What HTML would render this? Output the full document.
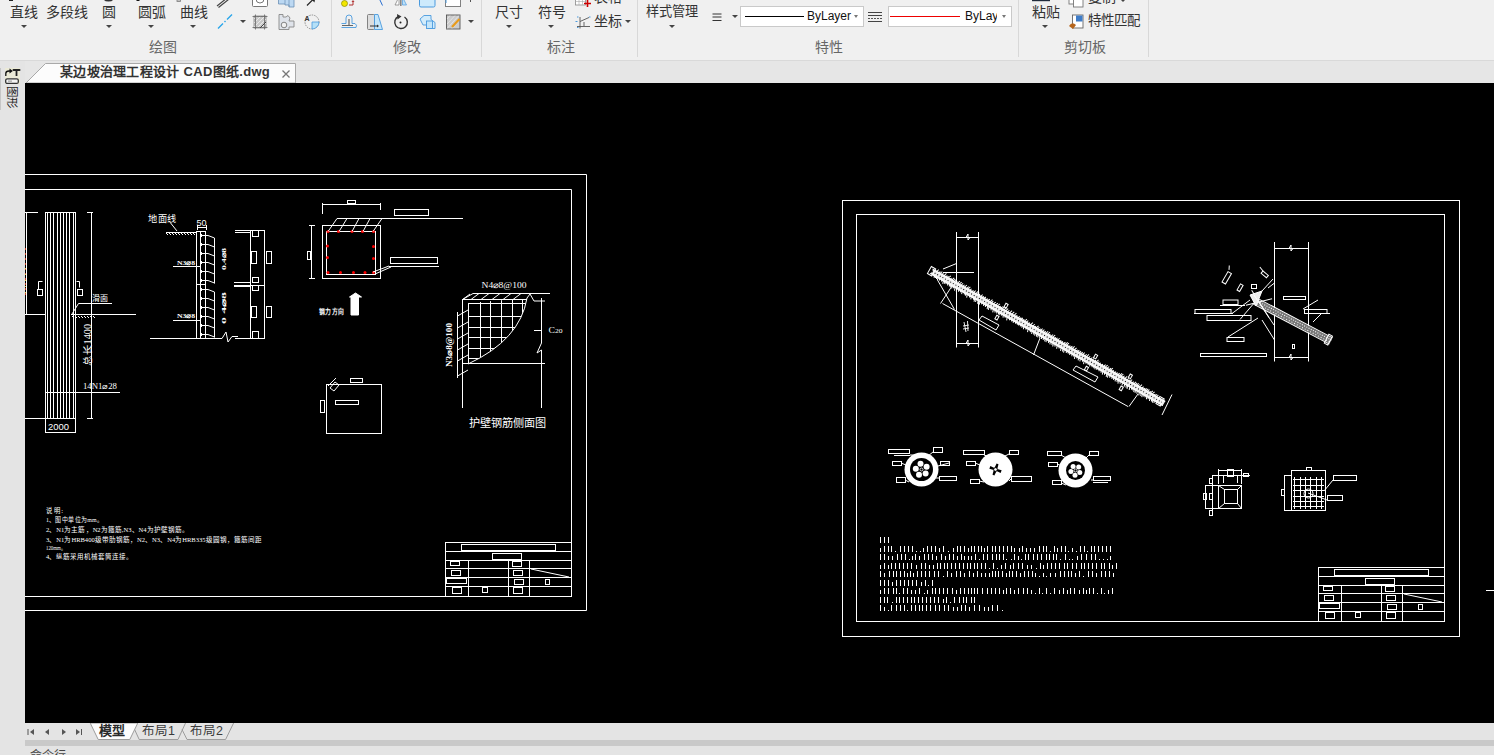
<!DOCTYPE html>
<html lang="zh-CN"><head><meta charset="utf-8">
<style>
*{box-sizing:border-box;margin:0;padding:0}
html,body{width:1494px;height:755px;overflow:hidden;background:#e4e4e4;font-family:"Liberation Sans",sans-serif;}
.abs{position:absolute}
#ribbon{position:absolute;left:0;top:0;width:1494px;height:61px;background:#f0f0f0;border-bottom:1px solid #d9d9d9}
.t{position:absolute;font-size:14px;line-height:14px;color:#333;white-space:nowrap}
.lbl{position:absolute;font-size:14px;line-height:14px;color:#666;white-space:nowrap}
.sep{position:absolute;top:0;width:1px;height:57px;background:#d8d8d8}
.arr{position:absolute;width:0;height:0;border-left:3px solid transparent;border-right:3px solid transparent;border-top:3px solid #444}
#tabrow{position:absolute;left:0;top:61px;width:1494px;height:22px;background:#e6e6e6}
#side{position:absolute;left:0;top:61px;width:25px;height:694px;background:#e4e4e4}
#canvas{position:absolute;left:25px;top:83px;width:1469px;height:640px;background:#000;overflow:hidden}
#btabs{position:absolute;left:25px;top:723px;width:1469px;height:17px;background:#e4e4e4}
#bbar{position:absolute;left:25px;top:740px;width:1469px;height:6px;background:#c9c9c9}
</style></head><body>
<div id="ribbon">
<svg width="1494" height="60" style="position:absolute;left:0;top:0">
<rect x="9" y="0" width="4" height="1" fill="#222"/>
<path d="M104,0 L113,0 Q112,1.5 108.5,1.5 Q105,1.5 104,0 Z" fill="#333"/>
<rect x="136.5" y="0" width="3" height="1" fill="#111"/>
<rect x="177" y="0" width="3.5" height="1.5" fill="none" stroke="#777" stroke-width="0.8"/>
<rect x="1032" y="0" width="18" height="1.2" fill="#1f2a3a"/>
<path d="M217,6 L227,-2 M218.5,7.5 L228.5,-0.5" stroke="#444" stroke-width="1.2"/>
<rect x="252.5" y="-6" width="15" height="12.5" rx="1" fill="#fff" stroke="#777" stroke-width="1"/><path d="M256,-1 A4,4 0 0 0 264,-1" fill="none" stroke="#777"/>
<path d="M278.5,-3 L294,-3 L294,7 L289,7 L289,5 L285,5 L285,4 L278.5,4 Z" fill="#bcd8f2" stroke="#6b8fb5" stroke-width="0.8"/><path d="M285,-3 L285,4 M289,-3 L289,7" stroke="#6b8fb5" stroke-width="0.7"/>
<path d="M307,5.5 L313,-0.5" stroke="#222" stroke-width="1.2"/><path d="M311,-1 L315,-1 L314.5,2.5 Z" fill="#222"/>
<circle cx="344.5" cy="3.5" r="3" fill="#f2e600" stroke="#8a8a00" stroke-width="0.7"/><path d="M349,5 L353,5 L353,2" fill="none" stroke="#b03030" stroke-width="1"/><path d="M351.5,2 L354.5,2 L353,0 Z" fill="#b03030"/>
<rect x="367" y="-3" width="4" height="3" fill="#555"/><path d="M371,-2 L376,-2 M379,-2 L382.5,5.5" stroke="#2a6fd0" stroke-width="1"/>
<path d="M395,5 L399,-3 L399,5 Z" fill="#fff" stroke="#777" stroke-width="0.7"/><rect x="400" y="-3" width="1.6" height="9" fill="#888"/><path d="M402.5,-3 L406.5,5 L402.5,5 Z" fill="#bde0f7" stroke="#4a9ade" stroke-width="0.7"/>
<rect x="419.5" y="-6" width="15.5" height="13" rx="1.5" fill="#cdeafc" stroke="#4a9ade" stroke-width="1"/><rect x="420" y="-2" width="9" height="2" fill="#777"/>
<rect x="445.5" y="-6" width="15" height="12.5" fill="#fff" stroke="#808080" stroke-width="1"/><rect x="445.5" y="0" width="1" height="3" fill="#4a9ade"/>
<path d="M470.5,0 L470.5,2" stroke="#555" stroke-width="1"/>
<rect x="575.5" y="-4" width="10" height="9" fill="#fff" stroke="#888" stroke-width="0.8"/><path d="M575.5,1.5 L585.5,1.5 M579,-4 L579,5 M582.5,-4 L582.5,5" stroke="#aaa" stroke-width="0.6"/><path d="M587.5,0 L587.5,7 M584,3.5 L591,3.5" stroke="#c00" stroke-width="1.6"/>
<rect x="1069" y="-5" width="9" height="9" fill="#fff" stroke="#777" stroke-width="0.9"/><rect x="1073.5" y="-2" width="9.5" height="9" fill="#fff" stroke="#777" stroke-width="0.9"/>
<path d="M218,28.5 L223,23.5 M224.5,22 L225.5,21 M227,19.5 L232,14.5" stroke="#2aa5ea" stroke-width="1.4"/>
<rect x="254" y="16" width="12" height="12" fill="#c8c8c8" stroke="#888" stroke-width="0.8"/><path d="M254,19 L257,16 M254,23 L261,16 M254,27 L265,16 M257,28 L266,19 M261,28 L266,23" stroke="#fff" stroke-width="0.6"/><path d="M252.5,16.5 L267.5,16.5 M252.5,27.5 L267.5,27.5 M255.5,14.5 L255.5,29.5 M264.5,14.5 L264.5,29.5" stroke="#666" stroke-width="0.8"/><path d="M260,28 L266,22" stroke="#444" stroke-width="1"/>
<path d="M279,14.5 L283,14.5 L283,17 L286,17 L288,15.5 L290,18 L289,21 L294,21 L294,27 L289,27 L289,29.5 L279,29.5 Z" fill="#dfe3ea" stroke="#888" stroke-width="0.9"/><circle cx="284" cy="25" r="2.8" fill="#f0f0f0" stroke="#777" stroke-width="0.9"/>
<circle cx="312" cy="22" r="7" fill="none" stroke="#777" stroke-width="0.8" stroke-dasharray="1.5 1"/><path d="M312,22 L319,22 A7,7 0 0 1 312,29 Z" fill="#b5e0f7" stroke="#4a9ade" stroke-width="0.8"/><text x="304.5" y="20.5" font-size="7" font-family="Liberation Sans" font-weight="bold" fill="#333">A</text>
<path d="M341.5,27.5 L356,27.5 Q357.5,25 355,23.5 L352,23.5 L352,18 Q352,15 349,15 Q346,15 346,18 L346,23.5 L341.5,23.5" fill="none" stroke="#4a9ade" stroke-width="0.9"/><path d="M342,25.5 L353,25.5 L349,25.5 L349,19" fill="none" stroke="#666" stroke-width="1.2"/>
<rect x="367.5" y="14.5" width="7" height="15" rx="1" fill="#ddd" stroke="#777" stroke-width="0.9"/><path d="M374.5,14.5 L378,14.5 L382.5,29.5 L374.5,29.5 Z" fill="#c5e6fa" stroke="#4a9ade" stroke-width="0.9"/><path d="M370,26 L378,26" stroke="#333" stroke-width="1"/><path d="M377,24.5 L379,26 L377,27.5 Z" fill="#333"/>
<path d="M398.5,16.5 A6.3,6.3 0 1 0 404.5,17" fill="none" stroke="#333" stroke-width="1.4"/><path d="M397,14 L401.5,16.5 L397.5,19.5 Z" fill="#333"/><circle cx="400.5" cy="22.5" r="1" fill="#222"/>
<path d="M420,19 L424,15.5 L431,15.5 L431,19.5 L435,22.5 L435,28.5 L428,28.5 L428,25 L423,25 Z" fill="#d3ecfb" stroke="#4a9ade" stroke-width="0.9"/><rect x="426.5" y="21" width="6" height="7.5" fill="#c5e6fa" stroke="#4a9ade" stroke-width="0.9"/>
<rect x="446.5" y="15" width="13.5" height="14" fill="#ccc" stroke="#555" stroke-width="0.9"/><path d="M447,19 L450,15.5 M447,24 L455,15.5 M447,28.5 L459,15.5 M452,28.5 L459,21" stroke="#eee" stroke-width="0.7"/><path d="M452,27 L459.5,19" stroke="#e89b1a" stroke-width="2.2"/>
<path d="M577,17 L578.5,17 M589,17 L590.5,17 M577,27.5 L578.5,27.5 M575.5,21.5 L577.5,21.5" stroke="#4a9ade" stroke-width="1.2"/><path d="M580,17 L580,28.5 M577,26.5 L590,26.5 M580,21.5 L589,17.5 M584,26 L584,22" stroke="#555" stroke-width="0.9"/>
<path d="M712.5,14 L721.5,14 M712.5,17 L721.5,17 M712.5,20.5 L721.5,20.5" stroke="#333" stroke-width="1.1"/>
<path d="M868,12.5 L882,12.5 M868,15.5 L882,15.5 M868,21.5 L882,21.5" stroke="#444" stroke-width="1"/><path d="M868,18.5 L882,18.5" stroke="#555" stroke-width="1" stroke-dasharray="2 1"/>
<rect x="1072.5" y="15" width="10.5" height="13" fill="#fff" stroke="#666" stroke-width="0.9"/><rect x="1076" y="15.5" width="6.5" height="6" fill="#3e7cc8"/><path d="M1069,26 Q1072,21 1076,25 L1073,29 Z" fill="#b5651d"/>
</svg>
  <div class="t" style="left:10px;top:5px">直线</div>
  <div class="t" style="left:46px;top:5px">多段线</div>
  <div class="t" style="left:102px;top:5px">圆</div>
  <div class="t" style="left:138px;top:5px">圆弧</div>
  <div class="t" style="left:180px;top:5px">曲线</div>
  <div class="arr" style="left:21px;top:25px"></div>
  <div class="arr" style="left:106px;top:25px"></div>
  <div class="arr" style="left:148px;top:25px"></div>
  <div class="arr" style="left:190px;top:25px"></div>
  <div class="arr" style="left:240px;top:20px"></div>
  <div class="lbl" style="left:149px;top:40px">绘图</div>
  <div class="sep" style="left:331px"></div>
  <div class="arr" style="left:468px;top:20px"></div>
  <div class="lbl" style="left:393px;top:40px">修改</div>
  <div class="sep" style="left:481px"></div>
  <div class="t" style="left:495px;top:5px">尺寸</div>
  <div class="t" style="left:538px;top:5px">符号</div>
  <div class="arr" style="left:506px;top:25px"></div>
  <div class="arr" style="left:548px;top:25px"></div>
  <div class="t" style="left:594px;top:-10px">表格</div>
  <div class="t" style="left:594px;top:14px">坐标</div>
  <div class="arr" style="left:625px;top:20px"></div>
  <div class="lbl" style="left:547px;top:40px">标注</div>
  <div class="sep" style="left:637px"></div>
  <div class="t" style="left:646px;top:5px;font-size:13.2px">样式管理</div>
  <div class="arr" style="left:669px;top:25px"></div>

  <div class="abs" style="left:740px;top:6px;width:124px;height:21px;background:#fff;border:1px solid #c9c9c9"></div>
  <div class="abs" style="left:745px;top:16px;width:59px;height:1px;background:#000"></div>
  <div class="abs" style="left:807px;top:9px;font-size:12px;line-height:14px;color:#111">ByLayer</div>
  <div class="arr" style="left:854px;top:15px;border-top-color:#777;border-left-width:2.5px;border-right-width:2.5px"></div>
  <div class="arr" style="left:732px;top:15px"></div>
  <div class="abs" style="left:888px;top:6px;width:124px;height:21px;background:#fff;border:1px solid #c9c9c9;overflow:hidden"><div class="abs" style="left:76px;top:2px;font-size:12px;line-height:14px;color:#111">ByLayer</div><div class="abs" style="left:108px;top:1px;width:16px;height:18px;background:#fff"></div></div>
  <div class="abs" style="left:890px;top:16px;width:70px;height:1px;background:#e00"></div>
  <div class="arr" style="left:1002px;top:15px;border-top-color:#777;border-left-width:2.5px;border-right-width:2.5px"></div>
  <div class="arr" style="left:1120px;top:-1px"></div>
  <div class="lbl" style="left:815px;top:40px">特性</div>
  <div class="sep" style="left:1018px"></div>
  <div class="t" style="left:1032px;top:5px">粘贴</div>
  <div class="arr" style="left:1042px;top:25px"></div>
  <div class="t" style="left:1088px;top:-10px">复制</div>
  <div class="t" style="left:1088px;top:14px;font-size:13.5px">特性匹配</div>
  <div class="lbl" style="left:1064px;top:40px">剪切板</div>
  <div class="sep" style="left:1148px"></div>
</div>
<div id="tabrow">
<svg width="320" height="22" style="position:absolute;left:0;top:0" shape-rendering="geometricPrecision">
<path d="M26,22 L45.5,2.5 L295.5,2.5 L295.5,22 Z" fill="#fcfcfc" stroke="#a9a9a9" stroke-width="1"/>
</svg>
<div class="abs" style="left:60px;top:4px;font-size:13px;line-height:14px;font-weight:bold;color:#333;white-space:nowrap;letter-spacing:0.3px">某边坡治理工程设计 CAD图纸.dwg</div>
<svg width="10" height="10" style="position:absolute;left:281px;top:8px"><path d="M1.5,1.5 L8.5,8.5 M8.5,1.5 L1.5,8.5" stroke="#777" stroke-width="1.3"/></svg>
</div>
<div id="side">
<div class="abs" style="left:0;top:7px;width:1px;height:42px;background:#c6c6c6"></div>
<svg width="25" height="60" style="position:absolute;left:0;top:0">
<rect x="5" y="7" width="15" height="16" fill="#ebead6"/>
<path d="M5.8,15 L5.8,12.5 Q5.8,10 9,10 L10,10" stroke="#111" stroke-width="1.3" fill="none"/><path d="M9.5,7.5 L12.8,10 L9.5,12.5 Z" fill="#111"/>
<path d="M13.5,9 L19.5,9" stroke="#222" stroke-width="2" stroke-linecap="round"/><path d="M16.5,9 L16.5,15" stroke="#222" stroke-width="1.8"/>
<rect x="5.7" y="17.8" width="12.6" height="4.6" rx="1.5" fill="#f4f4f4" stroke="#333" stroke-width="1.3"/>
<path d="M8,20.1 L12,20.1" stroke="#777" stroke-width="0.8"/>
</svg>
<div class="abs" style="left:5px;top:25px;width:14px;height:24px;overflow:visible">
<div style="position:absolute;left:-5px;top:5px;width:24px;height:14px;transform:rotate(90deg);font-size:11.5px;line-height:14px;color:#222;white-space:nowrap;letter-spacing:0px">图形</div>
</div>
</div>
<div id="canvas">
<svg width="1469" height="640" style="position:absolute;left:0;top:0">
<g transform="translate(-25,-83)">
<g stroke="#fff" fill="none" stroke-width="1">
<polyline points="0,174.5 586.5,174.5 586.5,610.5 0,610.5"/>
<polyline points="0,189.5 571.5,189.5 571.5,596.5 0,596.5"/>
<rect x="842.5" y="200.5" width="617.0" height="436.0"/>
<rect x="856.5" y="214.5" width="588.0" height="407.0"/>
<rect x="445.5" y="542.5" width="126.0" height="54.0"/>
<line x1="445.5" y1="551.5" x2="571.5" y2="551.5"/>
<line x1="445.5" y1="560.5" x2="571.5" y2="560.5"/>
<line x1="445.5" y1="568.5" x2="571.5" y2="568.5"/>
<line x1="445.5" y1="577.5" x2="571.5" y2="577.5"/>
<line x1="445.5" y1="586.5" x2="571.5" y2="586.5"/>
<line x1="468.5" y1="560.5" x2="468.5" y2="596.5"/>
<line x1="508.5" y1="560.5" x2="508.5" y2="596.5"/>
<line x1="529.5" y1="560.5" x2="529.5" y2="596.5"/>
<rect x="461.5" y="544.5" width="94.0" height="6.0"/>
<rect x="492.5" y="553.5" width="29.0" height="6.0"/>
<rect x="450.5" y="561.5" width="9.0" height="4.0"/>
<rect x="512.5" y="561.5" width="9.0" height="5.0"/>
<rect x="451.5" y="570.5" width="9.0" height="5.0"/>
<rect x="513.5" y="570.5" width="9.0" height="5.0"/>
<line x1="531" y1="569" x2="569" y2="577"/>
<rect x="446.5" y="578.5" width="20.0" height="5.0"/>
<rect x="514.5" y="579.5" width="9.0" height="5.0"/>
<rect x="545.5" y="579.5" width="4.0" height="5.0"/>
<rect x="452.5" y="587.5" width="9.0" height="6.0"/>
<rect x="482.5" y="587.5" width="5.0" height="5.0"/>
<rect x="513.5" y="587.5" width="9.0" height="6.0"/>
<rect x="1318.5" y="567.5" width="126.0" height="54.0"/>
<line x1="1318.5" y1="576.5" x2="1444.5" y2="576.5"/>
<line x1="1318.5" y1="585.5" x2="1444.5" y2="585.5"/>
<line x1="1318.5" y1="593.5" x2="1444.5" y2="593.5"/>
<line x1="1318.5" y1="602.5" x2="1444.5" y2="602.5"/>
<line x1="1318.5" y1="611.5" x2="1444.5" y2="611.5"/>
<line x1="1341.5" y1="585.5" x2="1341.5" y2="621.5"/>
<line x1="1381.5" y1="585.5" x2="1381.5" y2="621.5"/>
<line x1="1402.5" y1="585.5" x2="1402.5" y2="621.5"/>
<rect x="1334.5" y="569.5" width="94.0" height="6.0"/>
<rect x="1365.5" y="578.5" width="29.0" height="6.0"/>
<rect x="1323.5" y="586.5" width="9.0" height="4.0"/>
<rect x="1385.5" y="586.5" width="9.0" height="5.0"/>
<rect x="1324.5" y="595.5" width="9.0" height="5.0"/>
<rect x="1386.5" y="595.5" width="9.0" height="5.0"/>
<line x1="1404" y1="594" x2="1442" y2="602"/>
<rect x="1319.5" y="603.5" width="20.0" height="5.0"/>
<rect x="1387.5" y="604.5" width="9.0" height="5.0"/>
<rect x="1418.5" y="604.5" width="4.0" height="5.0"/>
<rect x="1325.5" y="612.5" width="9.0" height="6.0"/>
<rect x="1355.5" y="612.5" width="5.0" height="5.0"/>
<rect x="1386.5" y="612.5" width="9.0" height="6.0"/>
<line x1="26.5" y1="212" x2="26.5" y2="314.5"/>
<line x1="25" y1="212.5" x2="38" y2="212.5"/>
<line x1="25" y1="314.5" x2="45" y2="314.5"/>
<line x1="45.5" y1="212" x2="45.5" y2="418.5"/>
<line x1="47.5" y1="212" x2="47.5" y2="418.5"/>
<line x1="50.5" y1="212" x2="50.5" y2="418.5"/>
<line x1="53.5" y1="212" x2="53.5" y2="418.5"/>
<line x1="57.5" y1="212" x2="57.5" y2="418.5"/>
<line x1="60.5" y1="212" x2="60.5" y2="418.5"/>
<line x1="63.5" y1="212" x2="63.5" y2="418.5"/>
<line x1="66.5" y1="212" x2="66.5" y2="418.5"/>
<line x1="69.5" y1="212" x2="69.5" y2="418.5"/>
<line x1="73.5" y1="212" x2="73.5" y2="418.5"/>
<line x1="75.5" y1="212" x2="75.5" y2="418.5"/>
<line x1="45" y1="212.5" x2="76" y2="212.5"/>
<line x1="25" y1="418.5" x2="76" y2="418.5"/>
<line x1="45" y1="392.5" x2="120" y2="392.5"/>
<rect x="45.5" y="418.5" width="30.0" height="14.0"/>
<line x1="91.5" y1="212" x2="91.5" y2="418.5"/>
<line x1="87" y1="212.5" x2="93" y2="212.5"/>
<line x1="87" y1="418.5" x2="93" y2="418.5"/>
<polyline points="42.5,281.5 38.5,281.5 38.5,289.5"/>
<rect x="37.5" y="289.5" width="5.0" height="6.0"/>
<polyline points="76.5,281.5 79.5,281.5 79.5,287.5"/>
<rect x="77.5" y="289.5" width="5.0" height="6.0"/>
<line x1="71" y1="314.5" x2="136" y2="314.5"/>
<polyline points="72,314 78.5,303.5 112,303.5"/>
<line x1="72" y1="316" x2="74" y2="318"/>
<line x1="75" y1="316" x2="77" y2="318"/>
<line x1="78" y1="316" x2="80" y2="318"/>
<line x1="81" y1="316" x2="83" y2="318"/>
<line x1="84" y1="316" x2="86" y2="318"/>
<line x1="87" y1="316" x2="89" y2="318"/>
<line x1="90" y1="316" x2="92" y2="318"/>
<line x1="93" y1="316" x2="95" y2="318"/>
<line x1="166" y1="232.5" x2="196" y2="232.5"/>
<line x1="166" y1="233" x2="168" y2="235"/>
<line x1="169" y1="233" x2="171" y2="235"/>
<line x1="172" y1="233" x2="174" y2="235"/>
<line x1="175" y1="233" x2="177" y2="235"/>
<line x1="178" y1="233" x2="180" y2="235"/>
<line x1="181" y1="233" x2="183" y2="235"/>
<line x1="184" y1="233" x2="186" y2="235"/>
<line x1="187" y1="233" x2="189" y2="235"/>
<line x1="190" y1="233" x2="192" y2="235"/>
<line x1="193" y1="233" x2="195" y2="235"/>
<line x1="169" y1="221" x2="177" y2="231"/>
<rect x="196.5" y="231.5" width="9.0" height="107.0"/>
<line x1="200.5" y1="231.5" x2="200.5" y2="338.5"/>
<line x1="196" y1="284.5" x2="206" y2="284.5"/>
<line x1="197" y1="227.5" x2="206" y2="227.5"/>
<line x1="197.5" y1="225" x2="197.5" y2="230"/>
<line x1="206.5" y1="225" x2="206.5" y2="230"/>
<polyline points="201,235.5 208,235.5 214.5,238.0"/>
<polyline points="201,244.5 208,244.5 214.5,247.0"/>
<polyline points="201,253.5 208,253.5 214.5,256.0"/>
<polyline points="201,262.5 208,262.5 214.5,265.0"/>
<polyline points="201,271.5 208,271.5 214.5,274.0"/>
<polyline points="201,280.5 208,280.5 214.5,283.0"/>
<polyline points="201,289.5 208,289.5 214.5,292.0"/>
<polyline points="201,298.5 208,298.5 214.5,301.0"/>
<polyline points="201,307.5 208,307.5 214.5,310.0"/>
<polyline points="201,316.5 208,316.5 214.5,319.0"/>
<polyline points="201,325.5 208,325.5 214.5,328.0"/>
<polyline points="201,334.5 208,334.5 214.5,337.0"/>
<line x1="214.5" y1="238" x2="214.5" y2="283.5"/>
<line x1="214.5" y1="292" x2="214.5" y2="337.5"/>
<rect x="200" y="234" width="2" height="3" fill="#fff" stroke="none"/>
<rect x="200" y="243" width="2" height="3" fill="#fff" stroke="none"/>
<rect x="200" y="252" width="2" height="3" fill="#fff" stroke="none"/>
<rect x="200" y="261" width="2" height="3" fill="#fff" stroke="none"/>
<rect x="200" y="270" width="2" height="3" fill="#fff" stroke="none"/>
<rect x="200" y="279" width="2" height="3" fill="#fff" stroke="none"/>
<rect x="200" y="288" width="2" height="3" fill="#fff" stroke="none"/>
<rect x="200" y="297" width="2" height="3" fill="#fff" stroke="none"/>
<rect x="200" y="306" width="2" height="3" fill="#fff" stroke="none"/>
<rect x="200" y="315" width="2" height="3" fill="#fff" stroke="none"/>
<rect x="200" y="324" width="2" height="3" fill="#fff" stroke="none"/>
<rect x="200" y="333" width="2" height="3" fill="#fff" stroke="none"/>
<line x1="173" y1="266.5" x2="201" y2="266.5"/>
<line x1="173" y1="320.5" x2="201" y2="320.5"/>
<line x1="150" y1="338.5" x2="222" y2="338.5"/>
<polyline points="222,338.5 226,332 228,342 232,336.5 238,336.5"/>
<line x1="235" y1="230.5" x2="265" y2="230.5"/>
<line x1="235" y1="232.5" x2="250" y2="232.5"/>
<line x1="250.5" y1="230" x2="250.5" y2="338.5"/>
<line x1="264.5" y1="230" x2="264.5" y2="338.5"/>
<line x1="234" y1="282.5" x2="250" y2="282.5"/>
<line x1="234" y1="285.5" x2="265" y2="285.5"/>
<line x1="234" y1="286.5" x2="250" y2="286.5"/>
<line x1="235" y1="338.5" x2="265" y2="338.5"/>
<rect x="252.5" y="230.5" width="6.0" height="6.0"/>
<rect x="251.5" y="251.5" width="5.0" height="12.0"/>
<rect x="252.5" y="277.5" width="6.0" height="5.0"/>
<rect x="252.5" y="285.5" width="6.0" height="5.0"/>
<rect x="251.5" y="306.5" width="5.0" height="11.0"/>
<rect x="252.5" y="331.5" width="6.0" height="7.0"/>
<rect x="266.5" y="251.5" width="5.0" height="12.0"/>
<rect x="266.5" y="306.5" width="5.0" height="11.0"/>
<line x1="322" y1="204.5" x2="381" y2="204.5"/>
<line x1="322.5" y1="203" x2="322.5" y2="214"/>
<line x1="380.5" y1="203" x2="380.5" y2="210"/>
<rect x="347.5" y="200.5" width="8.0" height="3.0"/>
<rect x="394.5" y="209.5" width="34.0" height="6.0"/>
<line x1="337" y1="218.5" x2="463" y2="218.5"/>
<rect x="322.5" y="225.5" width="58.0" height="53.0"/>
<rect x="326.5" y="231.5" width="49.0" height="43.0"/>
<circle cx="328" cy="231.5" r="1.5" fill="#f00" stroke="none"/>
<circle cx="338.5" cy="231.5" r="1.5" fill="#f00" stroke="none"/>
<circle cx="352" cy="231.5" r="1.5" fill="#f00" stroke="none"/>
<circle cx="362.5" cy="231.5" r="1.5" fill="#f00" stroke="none"/>
<circle cx="373.5" cy="231.5" r="1.5" fill="#f00" stroke="none"/>
<circle cx="327.5" cy="246" r="1.5" fill="#f00" stroke="none"/>
<circle cx="327.5" cy="257.5" r="1.5" fill="#f00" stroke="none"/>
<circle cx="373.5" cy="246.5" r="1.5" fill="#f00" stroke="none"/>
<circle cx="373.5" cy="258.5" r="1.5" fill="#f00" stroke="none"/>
<circle cx="328" cy="272.5" r="1.5" fill="#f00" stroke="none"/>
<circle cx="340.5" cy="272.5" r="1.5" fill="#f00" stroke="none"/>
<circle cx="353.5" cy="272.5" r="1.5" fill="#f00" stroke="none"/>
<circle cx="365" cy="272.5" r="1.5" fill="#f00" stroke="none"/>
<circle cx="373.5" cy="272.5" r="1.5" fill="#f00" stroke="none"/>
<line x1="337" y1="218.5" x2="328" y2="231.5"/>
<line x1="347" y1="218.5" x2="339" y2="231.5"/>
<line x1="359" y1="218.5" x2="352" y2="231.5"/>
<line x1="370" y1="218.5" x2="363" y2="231.5"/>
<line x1="382" y1="218.5" x2="373" y2="231.5"/>
<line x1="311.5" y1="225.5" x2="311.5" y2="278.5"/>
<line x1="309" y1="225.5" x2="315" y2="225.5"/>
<line x1="309" y1="278.5" x2="315" y2="278.5"/>
<rect x="307.5" y="251.5" width="3.0" height="8.0"/>
<rect x="390.5" y="257.5" width="47.0" height="6.0"/>
<line x1="389" y1="266.5" x2="439" y2="266.5"/>
<line x1="373" y1="272" x2="389" y2="266"/>
<line x1="375" y1="274" x2="391" y2="267"/>
<polygon points="351,315 351,297 349.5,297 355.5,293 361.5,297 358.5,297 358.5,315" fill="#fff"/>
<rect x="326.5" y="384.5" width="55.0" height="49.0"/>
<rect x="350.5" y="378.5" width="12.0" height="4.0"/>
<rect x="335.5" y="400.5" width="23.0" height="4.0"/>
<rect x="320.5" y="400.5" width="4.0" height="12.0"/>
<polygon points="330,388 335,382 339,385 334,391"/>
<line x1="328" y1="386" x2="336" y2="378"/>
<line x1="473" y1="293.5" x2="550" y2="293.5"/>
<polyline points="473,293.5 462.5,299.5 527,299.5"/>
<line x1="462.5" y1="299" x2="462.5" y2="408"/>
<line x1="541.5" y1="298" x2="541.5" y2="343"/>
<polyline points="541.5,343 537,353 541.5,350 541.5,408"/>
<line x1="462" y1="363.5" x2="545" y2="363.5"/>
<polyline points="527,298 530,294 534,301 545,301"/>
<clipPath id="mc"><path d="M468,303 L527,298 Q520,340 468,364 Z"/></clipPath>
<g clip-path="url(#mc)">
<line x1="468.5" y1="299" x2="468.5" y2="366"/>
<line x1="480.5" y1="299" x2="480.5" y2="366"/>
<line x1="490.5" y1="299" x2="490.5" y2="366"/>
<line x1="501.5" y1="299" x2="501.5" y2="366"/>
<line x1="512.5" y1="299" x2="512.5" y2="366"/>
<line x1="522.5" y1="299" x2="522.5" y2="366"/>
<line x1="466" y1="303.5" x2="530" y2="303.5"/>
<line x1="466" y1="316.5" x2="530" y2="316.5"/>
<line x1="466" y1="327.5" x2="530" y2="327.5"/>
<line x1="466" y1="337.5" x2="530" y2="337.5"/>
<line x1="466" y1="348.5" x2="530" y2="348.5"/>
<line x1="466" y1="358.5" x2="530" y2="358.5"/>
</g>
<path d="M527,298 Q520,340 468,364" />
<line x1="471" y1="299.5" x2="479" y2="293.5"/>
<line x1="481" y1="299.5" x2="489" y2="293.5"/>
<line x1="492" y1="299.5" x2="500" y2="293.5"/>
<line x1="503" y1="299.5" x2="511" y2="293.5"/>
<line x1="513" y1="299.5" x2="521" y2="293.5"/>
<line x1="462" y1="300" x2="470" y2="294"/>
<line x1="457.5" y1="316" x2="468" y2="310"/>
<line x1="457.5" y1="328" x2="468" y2="322"/>
<line x1="457.5" y1="339" x2="468" y2="333"/>
<line x1="457.5" y1="350" x2="468" y2="344"/>
<line x1="457.5" y1="361" x2="468" y2="355"/>
<line x1="457.5" y1="376" x2="468" y2="370"/>
<line x1="457.5" y1="312" x2="457.5" y2="378"/>
<line x1="534" y1="330.5" x2="541" y2="330.5"/>
<line x1="956.5" y1="232" x2="956.5" y2="347.5"/>
<line x1="978.5" y1="232" x2="978.5" y2="347.5"/>
<line x1="956" y1="237.5" x2="978" y2="237.5"/>
<line x1="956" y1="343.5" x2="978" y2="343.5"/>
<polyline points="966,237.5 968,234 968,240 970,237.5"/>
<polyline points="966,343.5 968,340 968,346 970,343.5"/>
<line x1="943" y1="272.5" x2="974" y2="272.5"/>
<line x1="943" y1="269" x2="956.5" y2="263.5"/>
<line x1="942.5" y1="303.5" x2="1128" y2="406.5"/>
<line x1="1129" y1="406.5" x2="1138" y2="394"/>
<line x1="1033.5" y1="355" x2="1040" y2="338"/>
<line x1="1172" y1="394.5" x2="1162" y2="415"/>
<line x1="937.5" y1="280" x2="954.5" y2="309.5"/>
<line x1="940.5" y1="303.5" x2="952" y2="286"/>
<line x1="931" y1="273" x2="938" y2="280"/>
<path d="M964,322 L966,332 M967.5,321 L968,331 M963,326 L969,325 M963,329 L969,328" stroke-width="0.9"/>
<polygon points="979,320 982,316 999,325 996,330" />
<polygon points="1073,370 1076,366 1098,377 1095,382" />
<g transform="translate(932,271.5) rotate(29.638)"><rect x="0" y="-3" width="266.9" height="6" fill="#f0f0f0" stroke="none"/><line x1="-1" y1="-2.5" x2="266.9" y2="-2.5"/><line x1="-1" y1="2.5" x2="266.9" y2="2.5"/><line x1="0" y1="0" x2="266.9" y2="0" stroke="#000" stroke-dasharray="1 2"/><rect x="-3" y="-4" width="5" height="8"/><rect x="259.9" y="-4" width="5" height="8"/><line x1="4.0" y1="-2.5" x2="5.0" y2="-5.0" stroke-width="1"/><line x1="4.0" y1="2.5" x2="5.0" y2="4.5" stroke-width="1"/><line x1="6.5" y1="-2.5" x2="7.5" y2="-4.0" stroke-width="1"/><line x1="6.5" y1="2.5" x2="7.5" y2="4.0" stroke-width="1"/><line x1="8.0" y1="-2.5" x2="9.0" y2="-5.0" stroke-width="1"/><line x1="8.0" y1="2.5" x2="9.0" y2="4.0" stroke-width="1"/><line x1="10.0" y1="-2.5" x2="11.0" y2="-4.0" stroke-width="1"/><line x1="10.0" y1="2.5" x2="11.0" y2="4.0" stroke-width="1"/><line x1="12.5" y1="-2.5" x2="13.5" y2="-5.5" stroke-width="1"/><line x1="12.5" y1="2.5" x2="13.5" y2="4.0" stroke-width="1"/><line x1="14.5" y1="-2.5" x2="15.5" y2="-4.0" stroke-width="1"/><line x1="14.5" y1="2.5" x2="15.5" y2="5.5" stroke-width="1"/><line x1="16.0" y1="-2.5" x2="17.0" y2="-4.0" stroke-width="1"/><line x1="16.0" y1="2.5" x2="17.0" y2="4.5" stroke-width="1"/><line x1="17.5" y1="-2.5" x2="18.5" y2="-5.5" stroke-width="1"/><line x1="17.5" y1="2.5" x2="18.5" y2="4.0" stroke-width="1"/><line x1="19.5" y1="-2.5" x2="20.5" y2="-4.0" stroke-width="1"/><line x1="19.5" y1="2.5" x2="20.5" y2="4.5" stroke-width="1"/><line x1="21.5" y1="-2.5" x2="22.5" y2="-5.5" stroke-width="1"/><line x1="21.5" y1="2.5" x2="22.5" y2="4.5" stroke-width="1"/><line x1="23.0" y1="-2.5" x2="24.0" y2="-5.0" stroke-width="1"/><line x1="23.0" y1="2.5" x2="24.0" y2="4.5" stroke-width="1"/><line x1="24.5" y1="-2.5" x2="25.5" y2="-4.5" stroke-width="1"/><line x1="24.5" y1="2.5" x2="25.5" y2="5.0" stroke-width="1"/><line x1="26.0" y1="-2.5" x2="27.0" y2="-4.0" stroke-width="1"/><line x1="26.0" y1="2.5" x2="27.0" y2="4.0" stroke-width="1"/><line x1="28.0" y1="-2.5" x2="29.0" y2="-5.5" stroke-width="1"/><line x1="28.0" y1="2.5" x2="29.0" y2="5.5" stroke-width="1"/><line x1="30.0" y1="-2.5" x2="31.0" y2="-5.5" stroke-width="1"/><line x1="30.0" y1="2.5" x2="31.0" y2="5.5" stroke-width="1"/><line x1="32.0" y1="-2.5" x2="33.0" y2="-5.0" stroke-width="1"/><line x1="32.0" y1="2.5" x2="33.0" y2="4.5" stroke-width="1"/><line x1="34.0" y1="-2.5" x2="35.0" y2="-4.5" stroke-width="1"/><line x1="34.0" y1="2.5" x2="35.0" y2="4.0" stroke-width="1"/><line x1="36.0" y1="-2.5" x2="37.0" y2="-5.5" stroke-width="1"/><line x1="36.0" y1="2.5" x2="37.0" y2="5.0" stroke-width="1"/><line x1="38.5" y1="-2.5" x2="39.5" y2="-5.0" stroke-width="1"/><line x1="38.5" y1="2.5" x2="39.5" y2="4.0" stroke-width="1"/><line x1="40.0" y1="-2.5" x2="41.0" y2="-5.5" stroke-width="1"/><line x1="40.0" y1="2.5" x2="41.0" y2="4.5" stroke-width="1"/><line x1="42.0" y1="-2.5" x2="43.0" y2="-4.5" stroke-width="1"/><line x1="42.0" y1="2.5" x2="43.0" y2="5.5" stroke-width="1"/><line x1="44.5" y1="-2.5" x2="45.5" y2="-4.0" stroke-width="1"/><line x1="44.5" y1="2.5" x2="45.5" y2="4.0" stroke-width="1"/><line x1="46.5" y1="-2.5" x2="47.5" y2="-5.0" stroke-width="1"/><line x1="46.5" y1="2.5" x2="47.5" y2="5.0" stroke-width="1"/><line x1="49.0" y1="-2.5" x2="50.0" y2="-5.5" stroke-width="1"/><line x1="49.0" y1="2.5" x2="50.0" y2="4.0" stroke-width="1"/><line x1="50.5" y1="-2.5" x2="51.5" y2="-5.0" stroke-width="1"/><line x1="50.5" y1="2.5" x2="51.5" y2="5.5" stroke-width="1"/><line x1="52.0" y1="-2.5" x2="53.0" y2="-4.0" stroke-width="1"/><line x1="52.0" y1="2.5" x2="53.0" y2="5.0" stroke-width="1"/><line x1="54.5" y1="-2.5" x2="55.5" y2="-5.0" stroke-width="1"/><line x1="54.5" y1="2.5" x2="55.5" y2="5.5" stroke-width="1"/><line x1="56.5" y1="-2.5" x2="57.5" y2="-4.0" stroke-width="1"/><line x1="56.5" y1="2.5" x2="57.5" y2="5.5" stroke-width="1"/><line x1="58.5" y1="-2.5" x2="59.5" y2="-4.5" stroke-width="1"/><line x1="58.5" y1="2.5" x2="59.5" y2="4.0" stroke-width="1"/><line x1="61.0" y1="-2.5" x2="62.0" y2="-4.0" stroke-width="1"/><line x1="61.0" y1="2.5" x2="62.0" y2="4.5" stroke-width="1"/><line x1="63.0" y1="-2.5" x2="64.0" y2="-4.5" stroke-width="1"/><line x1="63.0" y1="2.5" x2="64.0" y2="4.5" stroke-width="1"/><line x1="65.5" y1="-2.5" x2="66.5" y2="-5.5" stroke-width="1"/><line x1="65.5" y1="2.5" x2="66.5" y2="5.5" stroke-width="1"/><line x1="67.0" y1="-2.5" x2="68.0" y2="-4.5" stroke-width="1"/><line x1="67.0" y1="2.5" x2="68.0" y2="5.5" stroke-width="1"/><line x1="69.5" y1="-2.5" x2="70.5" y2="-5.0" stroke-width="1"/><line x1="69.5" y1="2.5" x2="70.5" y2="4.5" stroke-width="1"/><line x1="72.0" y1="-2.5" x2="73.0" y2="-5.0" stroke-width="1"/><line x1="72.0" y1="2.5" x2="73.0" y2="5.5" stroke-width="1"/><line x1="74.0" y1="-2.5" x2="75.0" y2="-5.5" stroke-width="1"/><line x1="74.0" y1="2.5" x2="75.0" y2="4.5" stroke-width="1"/><line x1="76.0" y1="-2.5" x2="77.0" y2="-4.0" stroke-width="1"/><line x1="76.0" y1="2.5" x2="77.0" y2="4.5" stroke-width="1"/><line x1="78.0" y1="-2.5" x2="79.0" y2="-4.5" stroke-width="1"/><line x1="78.0" y1="2.5" x2="79.0" y2="4.5" stroke-width="1"/><line x1="79.5" y1="-2.5" x2="80.5" y2="-5.5" stroke-width="1"/><line x1="79.5" y1="2.5" x2="80.5" y2="4.5" stroke-width="1"/><line x1="81.5" y1="-2.5" x2="82.5" y2="-5.0" stroke-width="1"/><line x1="81.5" y1="2.5" x2="82.5" y2="4.0" stroke-width="1"/><line x1="83.5" y1="-2.5" x2="84.5" y2="-5.5" stroke-width="1"/><line x1="83.5" y1="2.5" x2="84.5" y2="5.0" stroke-width="1"/><line x1="85.5" y1="-2.5" x2="86.5" y2="-4.5" stroke-width="1"/><line x1="85.5" y1="2.5" x2="86.5" y2="4.0" stroke-width="1"/><line x1="88.0" y1="-2.5" x2="89.0" y2="-5.5" stroke-width="1"/><line x1="88.0" y1="2.5" x2="89.0" y2="5.5" stroke-width="1"/><line x1="90.5" y1="-2.5" x2="91.5" y2="-5.5" stroke-width="1"/><line x1="90.5" y1="2.5" x2="91.5" y2="4.0" stroke-width="1"/><line x1="93.0" y1="-2.5" x2="94.0" y2="-5.5" stroke-width="1"/><line x1="93.0" y1="2.5" x2="94.0" y2="4.0" stroke-width="1"/><line x1="95.0" y1="-2.5" x2="96.0" y2="-4.0" stroke-width="1"/><line x1="95.0" y1="2.5" x2="96.0" y2="4.5" stroke-width="1"/><line x1="97.5" y1="-2.5" x2="98.5" y2="-4.5" stroke-width="1"/><line x1="97.5" y1="2.5" x2="98.5" y2="4.0" stroke-width="1"/><line x1="99.5" y1="-2.5" x2="100.5" y2="-4.0" stroke-width="1"/><line x1="99.5" y1="2.5" x2="100.5" y2="4.0" stroke-width="1"/><line x1="101.0" y1="-2.5" x2="102.0" y2="-4.5" stroke-width="1"/><line x1="101.0" y1="2.5" x2="102.0" y2="4.0" stroke-width="1"/><line x1="103.0" y1="-2.5" x2="104.0" y2="-4.0" stroke-width="1"/><line x1="103.0" y1="2.5" x2="104.0" y2="4.0" stroke-width="1"/><line x1="105.0" y1="-2.5" x2="106.0" y2="-5.5" stroke-width="1"/><line x1="105.0" y1="2.5" x2="106.0" y2="4.5" stroke-width="1"/><line x1="107.0" y1="-2.5" x2="108.0" y2="-5.0" stroke-width="1"/><line x1="107.0" y1="2.5" x2="108.0" y2="5.0" stroke-width="1"/><line x1="109.5" y1="-2.5" x2="110.5" y2="-4.0" stroke-width="1"/><line x1="109.5" y1="2.5" x2="110.5" y2="4.0" stroke-width="1"/><line x1="112.0" y1="-2.5" x2="113.0" y2="-5.5" stroke-width="1"/><line x1="112.0" y1="2.5" x2="113.0" y2="5.5" stroke-width="1"/><line x1="114.5" y1="-2.5" x2="115.5" y2="-5.0" stroke-width="1"/><line x1="114.5" y1="2.5" x2="115.5" y2="4.0" stroke-width="1"/><line x1="116.5" y1="-2.5" x2="117.5" y2="-4.0" stroke-width="1"/><line x1="116.5" y1="2.5" x2="117.5" y2="5.0" stroke-width="1"/><line x1="118.5" y1="-2.5" x2="119.5" y2="-5.5" stroke-width="1"/><line x1="118.5" y1="2.5" x2="119.5" y2="4.5" stroke-width="1"/><line x1="120.0" y1="-2.5" x2="121.0" y2="-4.5" stroke-width="1"/><line x1="120.0" y1="2.5" x2="121.0" y2="5.0" stroke-width="1"/><line x1="122.0" y1="-2.5" x2="123.0" y2="-4.0" stroke-width="1"/><line x1="122.0" y1="2.5" x2="123.0" y2="5.0" stroke-width="1"/><line x1="123.5" y1="-2.5" x2="124.5" y2="-5.0" stroke-width="1"/><line x1="123.5" y1="2.5" x2="124.5" y2="5.0" stroke-width="1"/><line x1="125.5" y1="-2.5" x2="126.5" y2="-5.0" stroke-width="1"/><line x1="125.5" y1="2.5" x2="126.5" y2="4.5" stroke-width="1"/><line x1="127.5" y1="-2.5" x2="128.5" y2="-4.5" stroke-width="1"/><line x1="127.5" y1="2.5" x2="128.5" y2="4.5" stroke-width="1"/><line x1="129.5" y1="-2.5" x2="130.5" y2="-5.5" stroke-width="1"/><line x1="129.5" y1="2.5" x2="130.5" y2="4.5" stroke-width="1"/><line x1="131.5" y1="-2.5" x2="132.5" y2="-5.5" stroke-width="1"/><line x1="131.5" y1="2.5" x2="132.5" y2="5.0" stroke-width="1"/><line x1="133.0" y1="-2.5" x2="134.0" y2="-4.0" stroke-width="1"/><line x1="133.0" y1="2.5" x2="134.0" y2="5.0" stroke-width="1"/><line x1="135.5" y1="-2.5" x2="136.5" y2="-5.0" stroke-width="1"/><line x1="135.5" y1="2.5" x2="136.5" y2="4.5" stroke-width="1"/><line x1="137.5" y1="-2.5" x2="138.5" y2="-5.5" stroke-width="1"/><line x1="137.5" y1="2.5" x2="138.5" y2="5.0" stroke-width="1"/><line x1="139.5" y1="-2.5" x2="140.5" y2="-4.0" stroke-width="1"/><line x1="139.5" y1="2.5" x2="140.5" y2="4.5" stroke-width="1"/><line x1="141.0" y1="-2.5" x2="142.0" y2="-4.5" stroke-width="1"/><line x1="141.0" y1="2.5" x2="142.0" y2="5.5" stroke-width="1"/><line x1="143.0" y1="-2.5" x2="144.0" y2="-5.0" stroke-width="1"/><line x1="143.0" y1="2.5" x2="144.0" y2="4.5" stroke-width="1"/><line x1="145.5" y1="-2.5" x2="146.5" y2="-4.0" stroke-width="1"/><line x1="145.5" y1="2.5" x2="146.5" y2="5.5" stroke-width="1"/><line x1="147.5" y1="-2.5" x2="148.5" y2="-4.0" stroke-width="1"/><line x1="147.5" y1="2.5" x2="148.5" y2="4.0" stroke-width="1"/><line x1="150.0" y1="-2.5" x2="151.0" y2="-4.5" stroke-width="1"/><line x1="150.0" y1="2.5" x2="151.0" y2="5.5" stroke-width="1"/><line x1="152.0" y1="-2.5" x2="153.0" y2="-5.5" stroke-width="1"/><line x1="152.0" y1="2.5" x2="153.0" y2="5.0" stroke-width="1"/><line x1="153.5" y1="-2.5" x2="154.5" y2="-5.5" stroke-width="1"/><line x1="153.5" y1="2.5" x2="154.5" y2="5.5" stroke-width="1"/><line x1="156.0" y1="-2.5" x2="157.0" y2="-4.0" stroke-width="1"/><line x1="156.0" y1="2.5" x2="157.0" y2="4.5" stroke-width="1"/><line x1="158.0" y1="-2.5" x2="159.0" y2="-4.5" stroke-width="1"/><line x1="158.0" y1="2.5" x2="159.0" y2="4.0" stroke-width="1"/><line x1="160.0" y1="-2.5" x2="161.0" y2="-5.5" stroke-width="1"/><line x1="160.0" y1="2.5" x2="161.0" y2="4.5" stroke-width="1"/><line x1="162.5" y1="-2.5" x2="163.5" y2="-5.0" stroke-width="1"/><line x1="162.5" y1="2.5" x2="163.5" y2="4.5" stroke-width="1"/><line x1="164.5" y1="-2.5" x2="165.5" y2="-4.0" stroke-width="1"/><line x1="164.5" y1="2.5" x2="165.5" y2="4.0" stroke-width="1"/><line x1="166.0" y1="-2.5" x2="167.0" y2="-4.5" stroke-width="1"/><line x1="166.0" y1="2.5" x2="167.0" y2="5.5" stroke-width="1"/><line x1="168.0" y1="-2.5" x2="169.0" y2="-4.5" stroke-width="1"/><line x1="168.0" y1="2.5" x2="169.0" y2="4.0" stroke-width="1"/><line x1="170.0" y1="-2.5" x2="171.0" y2="-4.5" stroke-width="1"/><line x1="170.0" y1="2.5" x2="171.0" y2="5.0" stroke-width="1"/><line x1="172.0" y1="-2.5" x2="173.0" y2="-5.0" stroke-width="1"/><line x1="172.0" y1="2.5" x2="173.0" y2="5.0" stroke-width="1"/><line x1="174.5" y1="-2.5" x2="175.5" y2="-4.5" stroke-width="1"/><line x1="174.5" y1="2.5" x2="175.5" y2="4.0" stroke-width="1"/><line x1="176.5" y1="-2.5" x2="177.5" y2="-5.5" stroke-width="1"/><line x1="176.5" y1="2.5" x2="177.5" y2="5.5" stroke-width="1"/><line x1="178.5" y1="-2.5" x2="179.5" y2="-4.5" stroke-width="1"/><line x1="178.5" y1="2.5" x2="179.5" y2="4.0" stroke-width="1"/><line x1="181.0" y1="-2.5" x2="182.0" y2="-4.5" stroke-width="1"/><line x1="181.0" y1="2.5" x2="182.0" y2="4.0" stroke-width="1"/><line x1="183.0" y1="-2.5" x2="184.0" y2="-4.5" stroke-width="1"/><line x1="183.0" y1="2.5" x2="184.0" y2="4.5" stroke-width="1"/><line x1="185.5" y1="-2.5" x2="186.5" y2="-4.0" stroke-width="1"/><line x1="185.5" y1="2.5" x2="186.5" y2="4.0" stroke-width="1"/><line x1="187.5" y1="-2.5" x2="188.5" y2="-5.5" stroke-width="1"/><line x1="187.5" y1="2.5" x2="188.5" y2="4.0" stroke-width="1"/><line x1="189.0" y1="-2.5" x2="190.0" y2="-4.5" stroke-width="1"/><line x1="189.0" y1="2.5" x2="190.0" y2="4.5" stroke-width="1"/><line x1="191.0" y1="-2.5" x2="192.0" y2="-4.0" stroke-width="1"/><line x1="191.0" y1="2.5" x2="192.0" y2="4.0" stroke-width="1"/><line x1="193.5" y1="-2.5" x2="194.5" y2="-4.0" stroke-width="1"/><line x1="193.5" y1="2.5" x2="194.5" y2="4.0" stroke-width="1"/><line x1="196.0" y1="-2.5" x2="197.0" y2="-5.0" stroke-width="1"/><line x1="196.0" y1="2.5" x2="197.0" y2="4.5" stroke-width="1"/><line x1="198.0" y1="-2.5" x2="199.0" y2="-5.5" stroke-width="1"/><line x1="198.0" y1="2.5" x2="199.0" y2="5.5" stroke-width="1"/><line x1="200.0" y1="-2.5" x2="201.0" y2="-5.0" stroke-width="1"/><line x1="200.0" y1="2.5" x2="201.0" y2="4.5" stroke-width="1"/><line x1="202.5" y1="-2.5" x2="203.5" y2="-4.5" stroke-width="1"/><line x1="202.5" y1="2.5" x2="203.5" y2="5.5" stroke-width="1"/><line x1="204.0" y1="-2.5" x2="205.0" y2="-5.5" stroke-width="1"/><line x1="204.0" y1="2.5" x2="205.0" y2="5.5" stroke-width="1"/><line x1="206.0" y1="-2.5" x2="207.0" y2="-4.0" stroke-width="1"/><line x1="206.0" y1="2.5" x2="207.0" y2="4.5" stroke-width="1"/><line x1="208.5" y1="-2.5" x2="209.5" y2="-4.0" stroke-width="1"/><line x1="208.5" y1="2.5" x2="209.5" y2="4.5" stroke-width="1"/><line x1="210.5" y1="-2.5" x2="211.5" y2="-4.0" stroke-width="1"/><line x1="210.5" y1="2.5" x2="211.5" y2="4.5" stroke-width="1"/><line x1="212.5" y1="-2.5" x2="213.5" y2="-4.5" stroke-width="1"/><line x1="212.5" y1="2.5" x2="213.5" y2="5.0" stroke-width="1"/><line x1="214.5" y1="-2.5" x2="215.5" y2="-5.5" stroke-width="1"/><line x1="214.5" y1="2.5" x2="215.5" y2="4.5" stroke-width="1"/><line x1="216.0" y1="-2.5" x2="217.0" y2="-5.5" stroke-width="1"/><line x1="216.0" y1="2.5" x2="217.0" y2="5.5" stroke-width="1"/><line x1="218.0" y1="-2.5" x2="219.0" y2="-4.5" stroke-width="1"/><line x1="218.0" y1="2.5" x2="219.0" y2="4.5" stroke-width="1"/><line x1="220.5" y1="-2.5" x2="221.5" y2="-5.5" stroke-width="1"/><line x1="220.5" y1="2.5" x2="221.5" y2="5.0" stroke-width="1"/><line x1="223.0" y1="-2.5" x2="224.0" y2="-4.5" stroke-width="1"/><line x1="223.0" y1="2.5" x2="224.0" y2="5.0" stroke-width="1"/><line x1="225.0" y1="-2.5" x2="226.0" y2="-4.0" stroke-width="1"/><line x1="225.0" y1="2.5" x2="226.0" y2="5.0" stroke-width="1"/><line x1="226.5" y1="-2.5" x2="227.5" y2="-5.0" stroke-width="1"/><line x1="226.5" y1="2.5" x2="227.5" y2="5.5" stroke-width="1"/><line x1="229.0" y1="-2.5" x2="230.0" y2="-4.0" stroke-width="1"/><line x1="229.0" y1="2.5" x2="230.0" y2="5.5" stroke-width="1"/><line x1="231.0" y1="-2.5" x2="232.0" y2="-5.0" stroke-width="1"/><line x1="231.0" y1="2.5" x2="232.0" y2="4.0" stroke-width="1"/><line x1="232.5" y1="-2.5" x2="233.5" y2="-4.5" stroke-width="1"/><line x1="232.5" y1="2.5" x2="233.5" y2="4.0" stroke-width="1"/><line x1="234.0" y1="-2.5" x2="235.0" y2="-5.0" stroke-width="1"/><line x1="234.0" y1="2.5" x2="235.0" y2="5.0" stroke-width="1"/><line x1="235.5" y1="-2.5" x2="236.5" y2="-4.5" stroke-width="1"/><line x1="235.5" y1="2.5" x2="236.5" y2="5.0" stroke-width="1"/><line x1="237.5" y1="-2.5" x2="238.5" y2="-5.5" stroke-width="1"/><line x1="237.5" y1="2.5" x2="238.5" y2="5.0" stroke-width="1"/><line x1="240.0" y1="-2.5" x2="241.0" y2="-4.5" stroke-width="1"/><line x1="240.0" y1="2.5" x2="241.0" y2="5.5" stroke-width="1"/><line x1="242.0" y1="-2.5" x2="243.0" y2="-4.0" stroke-width="1"/><line x1="242.0" y1="2.5" x2="243.0" y2="5.0" stroke-width="1"/><line x1="243.5" y1="-2.5" x2="244.5" y2="-4.5" stroke-width="1"/><line x1="243.5" y1="2.5" x2="244.5" y2="5.5" stroke-width="1"/><line x1="245.0" y1="-2.5" x2="246.0" y2="-5.0" stroke-width="1"/><line x1="245.0" y1="2.5" x2="246.0" y2="4.0" stroke-width="1"/><line x1="246.5" y1="-2.5" x2="247.5" y2="-5.0" stroke-width="1"/><line x1="246.5" y1="2.5" x2="247.5" y2="4.0" stroke-width="1"/><line x1="248.5" y1="-2.5" x2="249.5" y2="-4.0" stroke-width="1"/><line x1="248.5" y1="2.5" x2="249.5" y2="5.0" stroke-width="1"/><line x1="250.0" y1="-2.5" x2="251.0" y2="-5.5" stroke-width="1"/><line x1="250.0" y1="2.5" x2="251.0" y2="4.0" stroke-width="1"/><line x1="252.0" y1="-2.5" x2="253.0" y2="-5.5" stroke-width="1"/><line x1="252.0" y1="2.5" x2="253.0" y2="5.0" stroke-width="1"/><line x1="254.0" y1="-2.5" x2="255.0" y2="-4.0" stroke-width="1"/><line x1="254.0" y1="2.5" x2="255.0" y2="4.5" stroke-width="1"/><line x1="255.5" y1="-2.5" x2="256.5" y2="-4.5" stroke-width="1"/><line x1="255.5" y1="2.5" x2="256.5" y2="5.0" stroke-width="1"/><line x1="257.0" y1="-2.5" x2="258.0" y2="-4.5" stroke-width="1"/><line x1="257.0" y1="2.5" x2="258.0" y2="4.5" stroke-width="1"/><rect x="80" y="-9" width="2.5" height="4"/><rect x="78" y="6" width="2.5" height="4"/><rect x="183" y="-9" width="2.5" height="4"/><rect x="181" y="6" width="2.5" height="4"/><rect x="223" y="-9" width="2.5" height="4"/><rect x="221" y="6" width="2.5" height="4"/></g>
<line x1="1274.5" y1="242" x2="1274.5" y2="361.5"/>
<line x1="1308.5" y1="242" x2="1308.5" y2="361.5"/>
<line x1="1274" y1="248.5" x2="1308" y2="248.5"/>
<line x1="1274" y1="357.5" x2="1308" y2="357.5"/>
<polyline points="1289,248.5 1291,245 1291,251 1293,248.5"/>
<polyline points="1289,357.5 1291,354 1291,360 1293,357.5"/>
<g transform="translate(1255,301) rotate(27.759)"><rect x="0" y="-3" width="85.9" height="6" fill="#777" stroke="none"/><line x1="0" y1="-3.5" x2="85.9" y2="-3.5"/><line x1="0" y1="3.5" x2="85.9" y2="3.5"/><line x1="0" y1="-1" x2="85.9" y2="-1" stroke-dasharray="1 1.5"/><line x1="0" y1="1.5" x2="85.9" y2="1.5" stroke-dasharray="1 2"/><rect x="80.9" y="-5" width="4" height="10"/><line x1="-8" y1="-8" x2="20" y2="8"/><line x1="-6" y1="8" x2="14" y2="-10"/></g>
<polygon points="1250,295 1262,291 1256,306" fill="#eee"/>
<line x1="1254" y1="295" x2="1274" y2="325"/>
<line x1="1262" y1="320" x2="1274.5" y2="340"/>
<line x1="1262" y1="291" x2="1273" y2="279"/>
<line x1="1268" y1="288" x2="1274.5" y2="283"/>
<line x1="1258" y1="318" x2="1228" y2="337"/>
<line x1="1250" y1="300" x2="1232" y2="313.5"/>
<line x1="1240" y1="319.5" x2="1255" y2="302"/>
<line x1="1318" y1="300" x2="1303" y2="309"/>
<line x1="1322" y1="313" x2="1313" y2="322"/>
<rect x="1223" y="300" width="15" height="4.5"/>
<rect x="1195" y="309.5" width="36" height="4.0"/>
<rect x="1207" y="315.5" width="44" height="5.0"/>
<rect x="1227" y="337.5" width="17" height="4.0"/>
<rect x="1200.5" y="353.5" width="66.0" height="3.0"/>
<rect x="1283.5" y="296.5" width="22.0" height="3.0"/>
<rect x="1304.5" y="309.5" width="22.5" height="4.0"/>
<rect x="1251.5" y="284.5" width="5.0" height="4.0"/>
<rect x="1292.5" y="344.5" width="2.0" height="4.0"/>
<line x1="1220" y1="305.5" x2="1245" y2="305.5"/>
<line x1="1194" y1="313.5" x2="1233" y2="313.5"/>
<line x1="1304" y1="313.5" x2="1330" y2="313.5"/>
<line x1="1283" y1="299.5" x2="1306" y2="299.5"/>
<g transform="translate(1222,282) rotate(-60)"><rect x="0" y="0" width="12" height="4"/><line x1="14" y1="0" x2="18" y2="-2"/></g>
<g transform="translate(1237,290) rotate(-60)"><rect x="0" y="0" width="7" height="3"/></g>
<g transform="translate(1263,271) rotate(40)"><rect x="0" y="0" width="7" height="3"/><line x1="-5" y1="-1" x2="0" y2="0"/></g>
<circle cx="921.5" cy="469.5" r="17" fill="#fff" stroke="none"/>
<circle cx="921.5" cy="469.5" r="11.5" fill="#000" stroke="none"/>
<circle cx="920.5" cy="463.8" r="3.0" fill="#fff" stroke="none"/>
<circle cx="915.8" cy="468.7" r="3.0" fill="#fff" stroke="none"/>
<circle cx="919.0" cy="474.7" r="3.0" fill="#fff" stroke="none"/>
<circle cx="925.6" cy="473.5" r="3.0" fill="#fff" stroke="none"/>
<circle cx="926.6" cy="466.8" r="3.0" fill="#fff" stroke="none"/>
<circle cx="921.5" cy="469.5" r="1.5" fill="#000" stroke="#fff" stroke-width="0.8"/>
<circle cx="995.5" cy="469.5" r="17" fill="#fff" stroke="none"/>
<g transform="translate(995.5,469.5)" fill="#000" stroke="none"><path d="M-1,-6 L1,-6 L1.5,-1 L6,-1.5 L6,1.5 L1.5,1 L1,6 L-1,6 L-1.5,1 L-6,1.5 L-6,-1.5 L-1.5,-1 Z" transform="rotate(20)"/><circle r="1.8" fill="#fff" stroke="#000" stroke-width="0.8"/></g>
<circle cx="1075.5" cy="470.5" r="17" fill="#fff" stroke="none"/>
<circle cx="1075.5" cy="470.5" r="9.5" fill="#000" stroke="none"/>
<circle cx="1073.1" cy="466.4" r="2.5" fill="#fff" stroke="none"/>
<circle cx="1070.9" cy="471.5" r="2.5" fill="#fff" stroke="none"/>
<circle cx="1075.0" cy="475.2" r="2.5" fill="#fff" stroke="none"/>
<circle cx="1079.8" cy="472.4" r="2.5" fill="#fff" stroke="none"/>
<circle cx="1078.7" cy="467.0" r="2.5" fill="#fff" stroke="none"/>
<circle cx="1075.5" cy="470.5" r="1.5" fill="#000" stroke="#fff" stroke-width="0.8"/>
<rect x="888.5" y="449.5" width="21.0" height="4.0"/>
<rect x="892.5" y="461.5" width="9.0" height="4.0"/>
<rect x="896.5" y="477.5" width="9.0" height="5.0"/>
<rect x="933.5" y="447.5" width="9.0" height="5.0"/>
<rect x="940.5" y="461.5" width="9.0" height="4.0"/>
<rect x="939.5" y="476.5" width="17.0" height="4.0"/>
<rect x="963.5" y="450.5" width="21.0" height="4.0"/>
<rect x="966.5" y="461.5" width="9.0" height="4.0"/>
<rect x="970.5" y="479.5" width="9.0" height="4.0"/>
<rect x="1009.5" y="450.5" width="9.0" height="4.0"/>
<rect x="1011.5" y="476.5" width="20.0" height="5.0"/>
<rect x="1047.5" y="451.5" width="14.0" height="4.0"/>
<rect x="1048.5" y="462.5" width="9.0" height="4.0"/>
<rect x="1052.5" y="480.5" width="9.0" height="4.0"/>
<rect x="1089.5" y="451.5" width="9.0" height="4.0"/>
<rect x="1093.5" y="476.5" width="17.0" height="4.0"/>
<line x1="894" y1="455.5" x2="910" y2="455.5"/>
<line x1="1093" y1="482.5" x2="1108" y2="482.5"/>
<rect x="1218.5" y="485.5" width="23.0" height="23.0"/>
<rect x="1224.5" y="489.5" width="13.0" height="14.0"/>
<line x1="1218.5" y1="485.5" x2="1224.5" y2="489.5"/>
<line x1="1241.5" y1="485.5" x2="1237.5" y2="489.5"/>
<line x1="1218.5" y1="508.5" x2="1224.5" y2="503.5"/>
<line x1="1241.5" y1="508.5" x2="1237.5" y2="503.5"/>
<rect x="1205.5" y="485.5" width="13.0" height="23.0"/>
<line x1="1212.5" y1="475" x2="1212.5" y2="516"/>
<line x1="1218" y1="470.5" x2="1242" y2="470.5"/>
<line x1="1218.5" y1="469" x2="1218.5" y2="484"/>
<line x1="1241.5" y1="469" x2="1241.5" y2="484"/>
<line x1="1212" y1="475.5" x2="1250" y2="475.5"/>
<line x1="1223.5" y1="475" x2="1223.5" y2="483"/>
<line x1="1237.5" y1="475" x2="1237.5" y2="483"/>
<rect x="1227.5" y="469.5" width="6.0" height="7.0"/>
<rect x="1243.5" y="473.5" width="5.0" height="3.0"/>
<rect x="1209.5" y="478.5" width="3.0" height="5.0"/>
<rect x="1203.5" y="493.5" width="3.0" height="6.0"/>
<rect x="1209.5" y="493.5" width="3.0" height="6.0"/>
<rect x="1209.5" y="510.5" width="3.0" height="5.0"/>
<rect x="1291.5" y="470.5" width="34.0" height="40.0"/>
<rect x="1284.5" y="475.5" width="7.0" height="35.0"/>
<line x1="1294.5" y1="477" x2="1294.5" y2="509"/>
<line x1="1300.5" y1="477" x2="1300.5" y2="509"/>
<line x1="1305.5" y1="477" x2="1305.5" y2="509"/>
<line x1="1310.5" y1="477" x2="1310.5" y2="509"/>
<line x1="1316.5" y1="477" x2="1316.5" y2="509"/>
<line x1="1321.5" y1="477" x2="1321.5" y2="509"/>
<line x1="1293" y1="479.5" x2="1324" y2="479.5"/>
<line x1="1293" y1="485.5" x2="1324" y2="485.5"/>
<line x1="1293" y1="490.5" x2="1324" y2="490.5"/>
<line x1="1293" y1="496.5" x2="1324" y2="496.5"/>
<line x1="1293" y1="501.5" x2="1324" y2="501.5"/>
<line x1="1293" y1="506.5" x2="1324" y2="506.5"/>
<circle cx="1308.5" cy="493.5" r="4.5"/>
<rect x="1306.5" y="467.5" width="5.0" height="3.0"/>
<rect x="1333.5" y="475.5" width="23.0" height="5.0"/>
<rect x="1327.5" y="495.5" width="15.0" height="5.0"/>
<rect x="1281.5" y="489.5" width="3.0" height="6.0"/>
<line x1="1333" y1="480" x2="1324" y2="491"/>
<line x1="1308" y1="493" x2="1327" y2="500"/>
<line x1="1486" y1="590.5" x2="1494" y2="590.5"/>
<line x1="25.5" y1="248" x2="25.5" y2="297" stroke="#c04020" stroke-dasharray="2 3"/>
<line x1="25.5" y1="268" x2="25.5" y2="297" stroke="#e0c040" stroke-dasharray="1 5"/>
<line x1="910" y1="455" x2="916" y2="455"/>
<line x1="901" y1="463" x2="906" y2="465"/>
<line x1="905" y1="480" x2="909" y2="482"/>
<line x1="933" y1="452" x2="928" y2="456"/>
<line x1="949" y1="463" x2="938" y2="466"/>
<line x1="939" y1="478" x2="936" y2="478"/>
<line x1="984" y1="455" x2="990" y2="457"/>
<line x1="975" y1="463" x2="980" y2="465"/>
<line x1="979" y1="481" x2="984" y2="482"/>
<line x1="1009" y1="454" x2="1003" y2="457"/>
<line x1="1011" y1="479" x2="1009" y2="481"/>
<line x1="1061" y1="455" x2="1066" y2="458"/>
<line x1="1057" y1="464" x2="1062" y2="466"/>
<line x1="1061" y1="483" x2="1066" y2="485"/>
<line x1="1089" y1="455" x2="1086" y2="458"/>
<line x1="1093" y1="480" x2="1091" y2="480"/>
<path d="M880,537h1v6h-1zM884,537h1v6h-1zM888,537h1v6h-1zM880,548h1v4h-1zM884,546h1v6h-1zM888,546h1v6h-1zM891,546h1v6h-1zM895,551h1v1h-1zM900,546h1v6h-1zM904,546h1v6h-1zM908,546h1v6h-1zM912,546h1v6h-1zM916,551h1v1h-1zM920,551h1v1h-1zM923,548h1v4h-1zM927,546h1v6h-1zM931,546h1v6h-1zM935,546h1v6h-1zM939,548h1v4h-1zM943,546h1v6h-1zM948,551h1v1h-1zM953,548h1v4h-1zM957,546h1v6h-1zM960,546h1v6h-1zM964,546h1v6h-1zM968,548h1v4h-1zM971,546h1v6h-1zM974,546h1v6h-1zM978,546h1v6h-1zM981,546h1v6h-1zM984,548h1v4h-1zM987,546h1v6h-1zM992,546h1v6h-1zM995,546h1v6h-1zM999,546h1v6h-1zM1003,546h1v6h-1zM1007,546h1v6h-1zM1011,546h1v6h-1zM1014,548h1v4h-1zM1019,548h1v4h-1zM1022,546h1v6h-1zM1026,548h1v4h-1zM1030,548h1v4h-1zM1034,548h1v4h-1zM1039,546h1v6h-1zM1043,546h1v6h-1zM1046,546h1v6h-1zM1050,551h1v1h-1zM1054,546h1v6h-1zM1057,548h1v4h-1zM1061,546h1v6h-1zM1065,546h1v6h-1zM1068,551h1v1h-1zM1072,548h1v4h-1zM1076,551h1v1h-1zM1080,546h1v6h-1zM1084,546h1v6h-1zM1087,551h1v1h-1zM1091,546h1v6h-1zM1094,546h1v6h-1zM1098,546h1v6h-1zM1102,546h1v6h-1zM1106,546h1v6h-1zM1110,546h1v6h-1zM880,554h1v6h-1zM884,554h1v6h-1zM888,556h1v4h-1zM892,556h1v4h-1zM897,554h1v6h-1zM901,554h1v6h-1zM905,554h1v6h-1zM909,559h1v1h-1zM912,556h1v4h-1zM915,554h1v6h-1zM919,556h1v4h-1zM924,554h1v6h-1zM928,554h1v6h-1zM932,554h1v6h-1zM936,556h1v4h-1zM941,554h1v6h-1zM945,556h1v4h-1zM949,554h1v6h-1zM953,554h1v6h-1zM957,556h1v4h-1zM961,554h1v6h-1zM964,556h1v4h-1zM968,556h1v4h-1zM971,556h1v4h-1zM975,554h1v6h-1zM979,559h1v1h-1zM983,554h1v6h-1zM987,554h1v6h-1zM992,554h1v6h-1zM996,554h1v6h-1zM999,554h1v6h-1zM1003,554h1v6h-1zM1006,559h1v1h-1zM1011,559h1v1h-1zM1014,554h1v6h-1zM1018,556h1v4h-1zM1021,559h1v1h-1zM1025,554h1v6h-1zM1028,554h1v6h-1zM1033,554h1v6h-1zM1037,554h1v6h-1zM1041,554h1v6h-1zM1046,554h1v6h-1zM1049,554h1v6h-1zM1053,554h1v6h-1zM1056,554h1v6h-1zM1060,559h1v1h-1zM1065,554h1v6h-1zM1069,559h1v1h-1zM1072,559h1v1h-1zM1077,556h1v4h-1zM1081,554h1v6h-1zM1086,554h1v6h-1zM1091,554h1v6h-1zM1095,554h1v6h-1zM1099,559h1v1h-1zM1103,559h1v1h-1zM1107,559h1v1h-1zM1110,556h1v4h-1zM880,565h1v4h-1zM884,563h1v6h-1zM888,565h1v4h-1zM891,563h1v6h-1zM895,563h1v6h-1zM899,563h1v6h-1zM903,563h1v6h-1zM907,563h1v6h-1zM911,563h1v6h-1zM916,565h1v4h-1zM921,563h1v6h-1zM925,563h1v6h-1zM929,565h1v4h-1zM933,565h1v4h-1zM937,563h1v6h-1zM940,563h1v6h-1zM944,563h1v6h-1zM947,563h1v6h-1zM951,563h1v6h-1zM955,563h1v6h-1zM959,563h1v6h-1zM963,563h1v6h-1zM967,563h1v6h-1zM970,563h1v6h-1zM974,563h1v6h-1zM977,563h1v6h-1zM981,563h1v6h-1zM985,563h1v6h-1zM989,568h1v1h-1zM993,563h1v6h-1zM997,568h1v1h-1zM1001,565h1v4h-1zM1005,563h1v6h-1zM1010,565h1v4h-1zM1013,563h1v6h-1zM1018,563h1v6h-1zM1022,563h1v6h-1zM1027,565h1v4h-1zM1031,565h1v4h-1zM1036,568h1v1h-1zM1040,563h1v6h-1zM1043,565h1v4h-1zM1047,563h1v6h-1zM1051,563h1v6h-1zM1055,563h1v6h-1zM1059,563h1v6h-1zM1064,563h1v6h-1zM1067,563h1v6h-1zM1072,563h1v6h-1zM1076,563h1v6h-1zM1081,563h1v6h-1zM1084,563h1v6h-1zM1088,563h1v6h-1zM1092,563h1v6h-1zM1096,563h1v6h-1zM1101,563h1v6h-1zM1104,563h1v6h-1zM1109,563h1v6h-1zM1112,565h1v4h-1zM1116,563h1v6h-1zM880,571h1v6h-1zM884,573h1v4h-1zM889,571h1v6h-1zM893,571h1v6h-1zM896,571h1v6h-1zM900,571h1v6h-1zM904,571h1v6h-1zM907,573h1v4h-1zM910,571h1v6h-1zM913,573h1v4h-1zM917,571h1v6h-1zM921,571h1v6h-1zM925,571h1v6h-1zM929,571h1v6h-1zM934,571h1v6h-1zM938,571h1v6h-1zM943,576h1v1h-1zM947,571h1v6h-1zM951,573h1v4h-1zM956,571h1v6h-1zM960,571h1v6h-1zM964,573h1v4h-1zM969,571h1v6h-1zM973,573h1v4h-1zM977,571h1v6h-1zM981,573h1v4h-1zM985,573h1v4h-1zM989,573h1v4h-1zM992,571h1v6h-1zM995,571h1v6h-1zM998,571h1v6h-1zM1002,571h1v6h-1zM1006,573h1v4h-1zM1009,571h1v6h-1zM1012,571h1v6h-1zM1016,571h1v6h-1zM1020,573h1v4h-1zM1024,571h1v6h-1zM1028,571h1v6h-1zM1032,571h1v6h-1zM1035,573h1v4h-1zM1039,576h1v1h-1zM1043,573h1v4h-1zM1046,576h1v1h-1zM1050,573h1v4h-1zM1055,573h1v4h-1zM1060,571h1v6h-1zM1064,571h1v6h-1zM1068,571h1v6h-1zM1071,571h1v6h-1zM1075,573h1v4h-1zM1079,571h1v6h-1zM1083,576h1v1h-1zM1088,571h1v6h-1zM1092,571h1v6h-1zM1096,573h1v4h-1zM1101,571h1v6h-1zM1105,571h1v6h-1zM1109,571h1v6h-1zM1113,573h1v4h-1zM880,580h1v6h-1zM884,580h1v6h-1zM888,580h1v6h-1zM892,582h1v4h-1zM896,580h1v6h-1zM900,580h1v6h-1zM904,580h1v6h-1zM908,580h1v6h-1zM912,580h1v6h-1zM916,580h1v6h-1zM921,582h1v4h-1zM925,580h1v6h-1zM928,585h1v1h-1zM932,580h1v6h-1zM880,590h1v4h-1zM884,588h1v6h-1zM888,588h1v6h-1zM893,588h1v6h-1zM896,588h1v6h-1zM899,593h1v1h-1zM903,588h1v6h-1zM907,588h1v6h-1zM911,590h1v4h-1zM915,590h1v4h-1zM919,588h1v6h-1zM924,593h1v1h-1zM927,590h1v4h-1zM932,588h1v6h-1zM935,588h1v6h-1zM939,588h1v6h-1zM943,588h1v6h-1zM947,588h1v6h-1zM952,588h1v6h-1zM956,590h1v4h-1zM960,588h1v6h-1zM964,588h1v6h-1zM968,588h1v6h-1zM971,588h1v6h-1zM974,588h1v6h-1zM977,588h1v6h-1zM982,588h1v6h-1zM987,588h1v6h-1zM991,588h1v6h-1zM995,588h1v6h-1zM999,588h1v6h-1zM1003,590h1v4h-1zM1006,588h1v6h-1zM1010,588h1v6h-1zM1014,590h1v4h-1zM1018,588h1v6h-1zM1023,588h1v6h-1zM1027,588h1v6h-1zM1031,590h1v4h-1zM1035,593h1v1h-1zM1039,588h1v6h-1zM1042,593h1v1h-1zM1046,588h1v6h-1zM1050,593h1v1h-1zM1054,588h1v6h-1zM1059,590h1v4h-1zM1063,588h1v6h-1zM1067,590h1v4h-1zM1070,588h1v6h-1zM1074,588h1v6h-1zM1079,590h1v4h-1zM1083,588h1v6h-1zM1086,590h1v4h-1zM1089,588h1v6h-1zM1093,588h1v6h-1zM1097,593h1v1h-1zM1101,588h1v6h-1zM1104,593h1v1h-1zM1108,590h1v4h-1zM1112,588h1v6h-1zM880,597h1v6h-1zM884,597h1v6h-1zM887,597h1v6h-1zM892,602h1v1h-1zM896,597h1v6h-1zM899,597h1v6h-1zM903,597h1v6h-1zM907,597h1v6h-1zM911,597h1v6h-1zM914,597h1v6h-1zM918,597h1v6h-1zM922,597h1v6h-1zM926,597h1v6h-1zM930,597h1v6h-1zM934,597h1v6h-1zM938,597h1v6h-1zM943,599h1v4h-1zM946,597h1v6h-1zM950,602h1v1h-1zM954,597h1v6h-1zM959,597h1v6h-1zM963,597h1v6h-1zM966,597h1v6h-1zM971,597h1v6h-1zM974,597h1v6h-1zM880,605h1v6h-1zM884,607h1v4h-1zM888,610h1v1h-1zM891,605h1v6h-1zM896,605h1v6h-1zM900,605h1v6h-1zM904,605h1v6h-1zM907,610h1v1h-1zM911,605h1v6h-1zM915,605h1v6h-1zM919,605h1v6h-1zM922,605h1v6h-1zM926,605h1v6h-1zM930,605h1v6h-1zM935,605h1v6h-1zM939,605h1v6h-1zM944,605h1v6h-1zM948,605h1v6h-1zM953,607h1v4h-1zM957,607h1v4h-1zM961,605h1v6h-1zM965,605h1v6h-1zM969,607h1v4h-1zM974,605h1v6h-1zM979,605h1v6h-1zM984,607h1v4h-1zM988,607h1v4h-1zM992,605h1v6h-1zM997,605h1v6h-1zM1002,610h1v1h-1z" fill="#fff" stroke="none" shape-rendering="crispEdges"/>
</g>
<g fill="#fff" stroke="none">
<text x="148" y="221.5" font-size="9.5" font-family="Liberation Serif" font-weight="normal" text-anchor="start" textLength="29" lengthAdjust="spacingAndGlyphs">地面线</text>
<text x="196.5" y="225.5" font-size="9" font-family="Liberation Sans" font-weight="normal" text-anchor="start" textLength="10" lengthAdjust="spacingAndGlyphs">50</text>
<text x="177" y="264.5" font-size="6.5" font-family="Liberation Serif" font-weight="bold" text-anchor="start" textLength="18" lengthAdjust="spacingAndGlyphs">N3⌀8</text>
<text x="177" y="317.5" font-size="6.5" font-family="Liberation Serif" font-weight="bold" text-anchor="start" textLength="18" lengthAdjust="spacingAndGlyphs">N3⌀8</text>
<text transform="translate(226,270) rotate(-90)" font-size="7" font-family="Liberation Serif" font-weight="bold" textLength="22" lengthAdjust="spacingAndGlyphs">0.4⌀8</text>
<text transform="translate(226,324) rotate(-90)" font-size="7" font-family="Liberation Serif" font-weight="bold" textLength="32" lengthAdjust="spacingAndGlyphs">0  4⌀8</text>
<text x="92" y="301" font-size="7.5" font-family="Liberation Serif" font-weight="normal" text-anchor="start" textLength="15" lengthAdjust="spacingAndGlyphs">滑面</text>
<text transform="translate(90.5,366) rotate(-90)" font-size="9.5" font-family="Liberation Serif" textLength="42" lengthAdjust="spacingAndGlyphs">总长1400</text>
<text x="83" y="388.5" font-size="7.5" font-family="Liberation Serif" font-weight="normal" text-anchor="start" textLength="34" lengthAdjust="spacingAndGlyphs">14N1⌀28</text>
<text x="48" y="430" font-size="9" font-family="Liberation Sans" font-weight="normal" text-anchor="start" textLength="21" lengthAdjust="spacingAndGlyphs">2000</text>
<text x="319" y="314" font-size="6.5" font-family="Liberation Serif" font-weight="bold" text-anchor="start" textLength="25" lengthAdjust="spacingAndGlyphs">钢力方向</text>
<text x="481.5" y="288" font-size="9" font-family="Liberation Serif" font-weight="normal" text-anchor="start" textLength="45" lengthAdjust="spacingAndGlyphs">N4⌀8@100</text>
<text transform="translate(452,367) rotate(-90)" font-size="7.5" font-family="Liberation Serif" font-weight="bold" textLength="44" lengthAdjust="spacingAndGlyphs">N3⌀8@100</text>
<text x="548.5" y="332.5" font-size="9" font-family="Liberation Serif" font-weight="normal" text-anchor="start" textLength="14" lengthAdjust="spacingAndGlyphs">C<tspan font-size="7">20</tspan></text>
<text x="468.5" y="426.5" font-size="11" font-family="Liberation Sans" font-weight="normal" text-anchor="start" textLength="78" lengthAdjust="spacingAndGlyphs">护壁钢筋侧面图</text>
<text x="46" y="512.5" font-size="6.5" font-family="Liberation Serif" font-weight="normal" text-anchor="start" textLength="17" lengthAdjust="spacingAndGlyphs">说 明:</text>
<text x="46" y="522" font-size="6.5" font-family="Liberation Serif" font-weight="normal" text-anchor="start" textLength="57" lengthAdjust="spacingAndGlyphs">1、图中单位为mm。</text>
<text x="46" y="531.5" font-size="6.5" font-family="Liberation Serif" font-weight="normal" text-anchor="start" textLength="143" lengthAdjust="spacingAndGlyphs">2、N1为主筋，N2为箍筋,N3、N4为护壁钢筋。</text>
<text x="46" y="541.5" font-size="6.5" font-family="Liberation Serif" font-weight="normal" text-anchor="start" textLength="216" lengthAdjust="spacingAndGlyphs">3、N1为HRB400级带肋钢筋，N2、N3、N4为HRB335级圆钢，箍筋间距</text>
<text x="46" y="549.5" font-size="6.5" font-family="Liberation Serif" font-weight="normal" text-anchor="start" textLength="20" lengthAdjust="spacingAndGlyphs">120mm。</text>
<text x="46" y="559" font-size="6.5" font-family="Liberation Serif" font-weight="normal" text-anchor="start" textLength="87" lengthAdjust="spacingAndGlyphs">4、纵筋采用机械套筒连接。</text>
</g>
</g>
</svg>
</div>
<div id="btabs">
<svg width="240" height="17" style="position:absolute;left:0;top:0">
<g fill="#555">
<rect x="2.5" y="6" width="1" height="6"/><path d="M9,6 L5,9 L9,12 Z"/>
<path d="M24,6 L20,9 L24,12 Z"/>
<path d="M37,6 L41,9 L37,12 Z"/>
<path d="M51,6 L55,9 L51,12 Z"/><rect x="56" y="6" width="1" height="6"/>
</g>
<g fill="none" stroke="#9c9c9c" stroke-width="1">
<path d="M109.6,6.5 L114.2,16.5 L153,16.5 L160.5,0"/>
<path d="M157,6.5 L162,16.5 L200.6,16.5 L208.6,0"/>
</g>
<path d="M65.2,0 L73.2,16.5 L104.8,16.5 L112.8,0 Z" fill="#fdfdfd" stroke="#9c9c9c" stroke-width="1"/>
<rect x="60" y="-1" width="60" height="1" fill="#000"/>
</svg>
<div class="abs" style="left:74px;top:1px;font-size:13px;line-height:14px;font-weight:bold;color:#2a2a2a">模型</div>
<div class="abs" style="left:117px;top:1px;font-size:12.5px;line-height:14px;color:#3a3a3a">布局1</div>
<div class="abs" style="left:165px;top:1px;font-size:12.5px;line-height:14px;color:#3a3a3a">布局2</div>
</div>
<div id="bbar"></div>
<div class="abs" style="left:30px;top:750px;font-size:12px;line-height:13px;color:#444">命令行</div>
</body></html>
